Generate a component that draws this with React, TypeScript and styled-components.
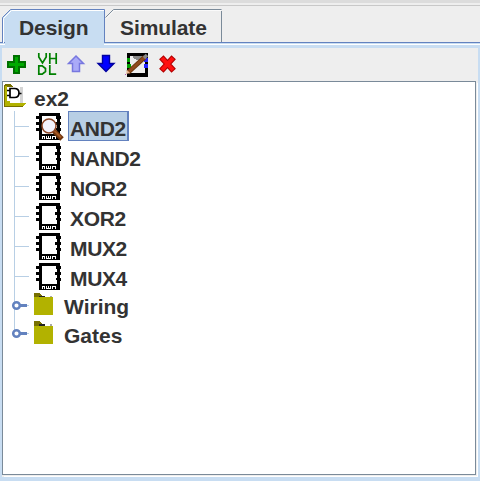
import React from 'react';
import styled, { createGlobalStyle } from 'styled-components';

const GlobalStyle = createGlobalStyle`
  * { box-sizing: border-box; }
  body { margin: 0; background: #eee; overflow: hidden; }
`;

const Window = styled.div`
  width: 480px;
  height: 481px;
  display: flex;
  flex-direction: column;
  background: #eee;
  color: #333;
  font: bold 21px 'Liberation Sans', Arial, sans-serif;
  svg { display: block; flex: none; }
`;

const TopEdge = styled.div`
  height: 6px;
  border-top: 3px solid #dcdcdc;
  border-bottom: 1px solid #c8c8c8;
  flex: none;
`;

const TabBar = styled.div`
  height: 42px;
  flex: none;
  display: flex;
  padding: 3px 0 0 2px;
  background: linear-gradient(#eee 36px, #6382bf 36px 37px, #c8ddf2 37px 38px, #fff 38px 39px, #c8ddf2 39px);
`;

const Tab = styled.div<{ $w: number; $active?: boolean }>`
  position: relative;
  width: ${p => p.$w}px;
  height: ${p => (p.$active ? 39 : 33)}px;
  line-height: 38px;
  padding-left: ${p => (p.$active ? 17 : 15)}px;
  letter-spacing: -0.1px;
`;

const TabShape = styled.svg`
  position: absolute;
  left: 0;
  top: 0;
`;

const TabLabel = styled.span`
  position: relative;
`;

const Panel = styled.div`
  flex: 1;
  min-height: 0;
  display: flex;
  flex-direction: column;
  border: solid #c8ddf2;
  border-width: 0 2px 4px;
`;

const Toolbar = styled.div`
  height: 33px;
  flex: none;
  display: flex;
`;

const Tool = styled.div`
  width: 30px;
  height: 33px;
`;

const Tree = styled.div`
  flex: 1;
  border: 1px solid #7a8a99;
  background: #fff;
  margin-right: 2px;
  margin-bottom: 2px;
  box-shadow: 1px 1px 0 #eee, 2px 2px 0 #fff;
`;

const Row = styled.div<{ $h: number }>`
  height: ${p => p.$h}px;
  display: flex;
`;

const Label = styled.div<{ $selected?: boolean; $line?: number; $tight?: boolean }>`
  height: 30px;
  line-height: ${p => p.$line ?? 34}px;
  letter-spacing: ${p => (p.$tight ? -0.35 : 0)}px;
  padding: 0 1px;
  border: 1px solid ${p => (p.$selected ? '#6382bf' : 'transparent')};
  border-right-width: 2px;
  background: ${p => (p.$selected ? '#b8cfe5' : 'transparent')};
  min-width: ${p => (p.$selected ? 61 : 0)}px;
  white-space: nowrap;
`;

const Chip = ({ open }: { open?: boolean }) => (
  <svg width="65" height="30" shapeRendering="crispEdges">
    <path d="M11.5 0v30M11 15.5h15" stroke="#b8cfe5" fill="none" />
    <path d="M36 2h21v27H36zM33 5h3v3h-3zM33 11h3v3h-3zM33 17h3v3h-3zM57 5h1v3h-1zM57 11h1v3h-1zM57 17h1v3h-1z" />
    <path d="M39 5h15v18H39z" fill="#fff" />
    <path d="M53 5h1v3h-1zM52 11h2v3h-2zM53 17h1v2h-1z" />
    <path d="M39 25h3v3h-1v-2h-1v2h-1zM43 25h1v2h1v-2h1v2h1v-2h1v3h-5zM49 25h4v3h-1v-2h-2v2h-1z" fill="#fff" />
    {open && (
      <g shapeRendering="auto">
        <path d="m51 20 8 8" stroke="#70340c" strokeWidth="5" />
        <path d="m51 19.5 7 7" stroke="#a65a25" strokeWidth="2" />
        <circle cx="46" cy="15" r="7" fill="#f1f1fc" stroke="#8b4525" strokeWidth="1.5" />
      </g>
    )}
  </svg>
);

const Folder = ({ last }: { last?: boolean }) => (
  <svg width="59" height="30" shapeRendering="crispEdges">
    <path d={last ? 'M11.5 0v10' : 'M11.5 0v30'} stroke="#b8cfe5" />
    <g transform={last ? 'translate(0 -1)' : undefined}>
      <path d="M24 14.5h2" stroke="#b8cfe5" />
      <path d="M16 13h8v3h-8z" fill="#6382bf" />
      <circle cx="13.5" cy="14.5" r="3.3" fill="#fff" stroke="#6382bf" strokeWidth="2.5" shapeRendering="auto" />
      <path d="M31 2h5l3 3v2h-8z" fill="#777000" />
      <path d="M36 5h6v2h-6z" fill="#222" />
      <path d="M47 5h2v2h-2z" fill="#aaa" />
    </g>
    <path d="M31 6h19v18H31z" fill="#b2b200" />
  </svg>
);

const RootIcon = () => (
  <svg width="29" height="29" shapeRendering="crispEdges">
    <path d="M1 3l2-1h5l2 3v19H1z" fill="#777000" />
    <path d="M2 4h2v20H2z" fill="#b2b200" />
    <path d="M4 5h14v17H4z" fill="#fff" />
    <path d="M17 5h3v16h-3z" fill="#d4d4d4" />
    <path d="M4 19h3v2h16l-3 4H1z" fill="#b2b200" />
    <path d="M1 24h19v1H1z" fill="#777000" />
    <path d="M4 8.5h3M4 13.5h3M7 6.5h4.5q4.5 0 4.5 4.5t-4.5 4.5H7zM16 11.5h2.5" stroke="#000" strokeWidth="1.7" fill="none" shapeRendering="auto" />
  </svg>
);

export default function App() {
  return (
    <Window>
      <GlobalStyle />
      <TopEdge />
      <TabBar>
        <Tab $w={103} $active>
          <TabShape width="103" height="39">
            <path d="M0 33V9L9 .5h94V33h-1v6H3v-6z" fill="#c8ddf2" />
            <path d="M.5 33V8.5l8-8h94V33" fill="none" stroke="#6382bf" />
            <path d="M1.5 34V9.5l8-8H102" fill="none" stroke="#fff" />
          </TabShape>
          <TabLabel>Design</TabLabel>
        </Tab>
        <Tab $w={118}>
          <TabShape width="118" height="33">
            <path d="M.5 8.5l8-8h108M116.5 2v31" fill="none" stroke="#7a8a99" />
            <path d="M1 9.5l8-8h107" fill="none" stroke="#fff" strokeOpacity=".7" />
          </TabShape>
          <TabLabel>Simulate</TabLabel>
        </Tab>
      </TabBar>
      <Panel>
        <Toolbar>
          <Tool>
            <svg width="30" height="33" shapeRendering="crispEdges">
              <path d="M12 8h5v6h6v5h-6v6h-5v-6H6v-5h6z" fill="#00aa00" stroke="#007000" strokeWidth="2" />
            </svg>
          </Tool>
          <Tool>
            <svg width="30" height="33">
              <path d="M6.8 5v4l3.7 6 3.7-6V5M17.8 5v11M24.2 5v11M17.8 10.5h6.4M6.8 17.8v8.4h3.4l3.3-2.7v-3l-3.3-2.7zM17.8 17v9.2h6.4" fill="none" stroke="#008000" strokeWidth="1.7" />
            </svg>
          </Tool>
          <Tool>
            <svg width="30" height="33">
              <path d="M14 8 21.5 15.5H17.5V23.5H10.5V15.5H6.5z" fill="#aaaaf8" stroke="#7777df" strokeWidth="1.5" />
            </svg>
          </Tool>
          <Tool>
            <svg width="30" height="33">
              <path d="M10.5 7.5h7v8h4.5l-8 8-8-8h4.5z" fill="#0000ff" stroke="#0000a0" strokeWidth="1.4" />
            </svg>
          </Tool>
          <Tool>
            <svg width="30" height="33" shapeRendering="crispEdges">
              <path d="M5 5h21v24H5z" />
              <path d="M8 8h15v17H8z" fill="#eee" />
              <path d="M11 8h10v2l-3 2h-3l-4-2z" fill="#888" />
              <path d="M5 10h3v4H5zM5 16h4v4H5z" fill="#00a000" />
              <path d="M22 10h4v4h-4zM22 16h4v4h-4z" fill="#2222ff" />
              <g shapeRendering="auto">
                <path d="M6 24.5 23 9" stroke="#6b360f" strokeWidth="4.5" />
                <path d="M6 24.5 23 9" stroke="#8f4a1b" strokeWidth="3" />
                <path d="m22 10 3-3" stroke="#888" strokeWidth="3.5" />
                <path d="m4 26 1-4 3 3z" fill="#e9b796" />
              </g>
              <path d="M3 26h1v1H3z" fill="#b050b0" />
            </svg>
          </Tool>
          <Tool>
            <svg width="30" height="33">
              <path d="m9.3 9.3 12.4 13.4M21.7 9.3 9.3 22.7" stroke="#b00000" strokeWidth="6" />
              <path d="m10 10 11 12M21 10 10 22" stroke="#ff1010" strokeWidth="4" />
            </svg>
          </Tool>
        </Toolbar>
        <Tree>
          <Row $h={29}><RootIcon /><Label $line={31}>ex2</Label></Row>
          {['AND2', 'NAND2', 'NOR2', 'XOR2', 'MUX2', 'MUX4'].map((name, i) => (
            <Row key={name} $h={30}>
              <Chip open={i === 0} />
              <Label $selected={i === 0} $tight>{name}</Label>
            </Row>
          ))}
          <Row $h={29}><Folder /><Label $line={29}>Wiring</Label></Row>
          <Row $h={28}><Folder last /><Label $line={29}>Gates</Label></Row>
        </Tree>
      </Panel>
    </Window>
  );
}
